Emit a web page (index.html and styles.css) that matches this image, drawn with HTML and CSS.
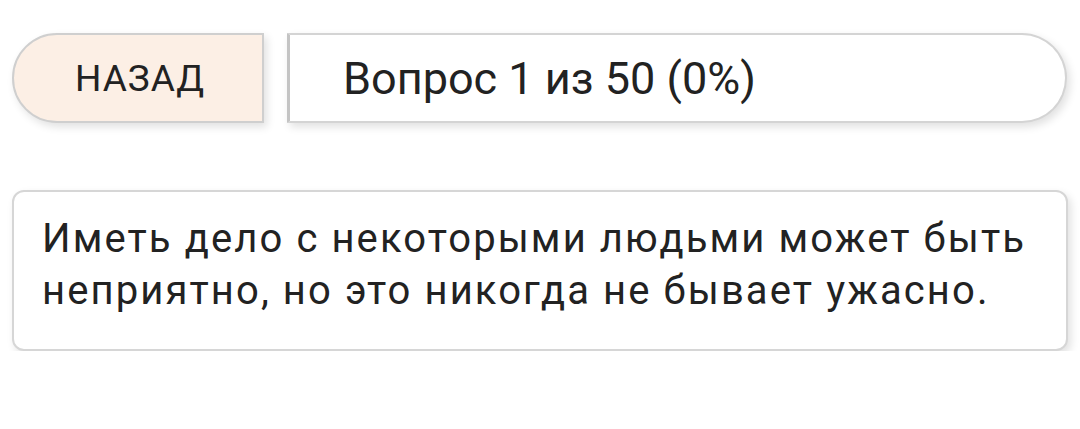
FILE: index.html
```html
<!DOCTYPE html>
<html lang="ru">
<head>
<meta charset="utf-8">
<link rel="stylesheet" href="styles.css">
</head>
<body>
<div class="page">
  <div class="top">
    <button class="back">НАЗАД</button>
    <div class="progress">Вопрос 1 из 50 (0%)</div>
  </div>
  <div class="card">Иметь дело с некоторыми людьми может быть неприятно, но это никогда не бывает ужасно.</div>
</div>
</body>
</html>
```
FILE: styles.css
```css
html, body {
  margin: 0;
  padding: 0;
  background: #ffffff;
}
.page {
  padding: 33px 12px 0 12px;
  font-family: Roboto, "Noto Sans", sans-serif;
  color: #222222;
}
.top {
  display: flex;
  gap: 23px;
  height: 90px;
  margin-right: 1px;
}
.back {
  box-sizing: border-box;
  width: 252px;
  height: 90px;
  border: 2px solid #cfcfcf;
  border-radius: 45px 0 0 45px;
  background: #fcefe5;
  font-family: Roboto, "Noto Sans", sans-serif;
  font-size: 37px;
  letter-spacing: 1px;
  color: #222222;
  padding: 0 0 0 4px;
  box-shadow: 3px 4px 8px rgba(0,0,0,0.12);
}
.progress {
  box-sizing: border-box;
  flex: 1;
  height: 90px;
  border: 2px solid #d4d4d4;
  border-left: 3px solid #c4c4c4;
  border-radius: 0 45px 45px 0;
  background: #ffffff;
  display: flex;
  align-items: center;
  padding-left: 53px;
  font-size: 45px;
  box-shadow: 3px 4px 8px rgba(0,0,0,0.12);
}
.card {
  box-sizing: border-box;
  margin-top: 67px;
  height: 161px;
  border: 2px solid #d6d6d6;
  border-radius: 12px;
  background: #ffffff;
  padding: 21px 28px;
  font-size: 40px;
  line-height: 52px;
  letter-spacing: 2.1px;
  box-shadow: 3px 4px 8px rgba(0,0,0,0.12);
}
```
